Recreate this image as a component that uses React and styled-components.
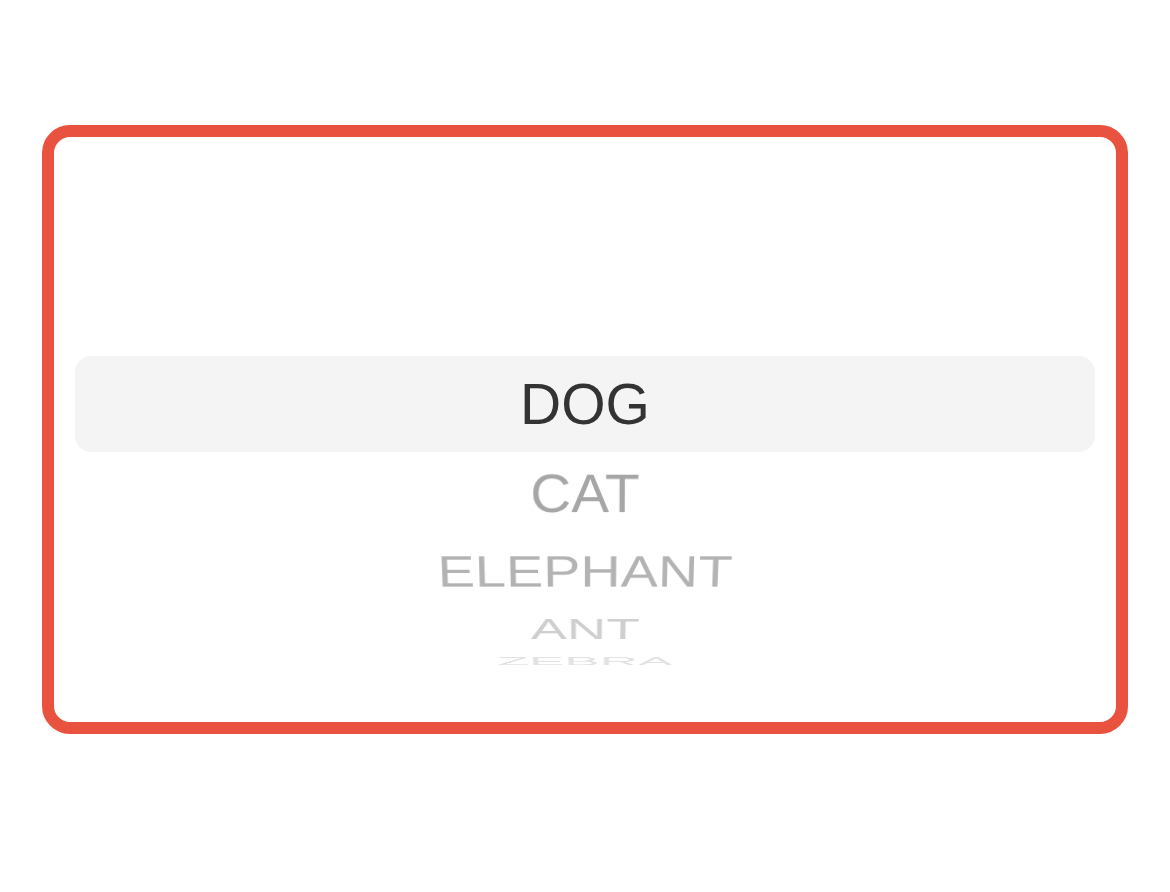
import React from "react";
import styled, { createGlobalStyle } from "styled-components";

const GlobalStyle = createGlobalStyle`
  html, body {
    margin: 0;
    padding: 0;
    background: #ffffff;
  }
  body {
    font-family: "Liberation Sans", Arial, Helvetica, sans-serif;
  }
`;

const Page = styled.div`
  box-sizing: border-box;
  width: 1170px;
  height: 892px;
  padding: 125px 42px 0;
`;

const Frame = styled.div`
  box-sizing: border-box;
  height: 609px;
  border: 12px solid #e9523f;
  border-radius: 28px;
  background: #ffffff;
  padding: 219px 21px 0;
`;

const Wheel = styled.div`
  display: grid;
  height: 96px;
  perspective: 2660px;
  perspective-origin: 50% 50%;
`;

const Highlight = styled.div`
  grid-area: 1 / 1;
  background: #f4f4f4;
  border-radius: 16px;
`;

const Item = styled.div`
  grid-area: 1 / 1;
  display: flex;
  align-items: center;
  justify-content: center;
  font-size: 57px;
  line-height: 1;
  letter-spacing: 0;
  color: ${(p) => p.$color};
  transform-origin: 50% 50% -291px;
  transform: rotateX(${(p) => -18 * p.$index}deg);
  backface-visibility: hidden;
  white-space: nowrap;
`;

const items = [
  { label: "DOG", color: "#333333" },
  { label: "CAT", color: "#a6a6a6" },
  { label: "ELEPHANT", color: "#b3b3b3" },
  { label: "ANT", color: "#cfcfcf" },
  { label: "ZEBRA", color: "#e3e3e3" },
];

export default function App() {
  return (
    <>
      <GlobalStyle />
      <Page>
        <Frame>
          <Wheel>
            <Highlight />
            {items.map((it, i) => (
              <Item key={it.label} $index={i} $color={it.color}>
                {it.label}
              </Item>
            ))}
          </Wheel>
        </Frame>
      </Page>
    </>
  );
}
